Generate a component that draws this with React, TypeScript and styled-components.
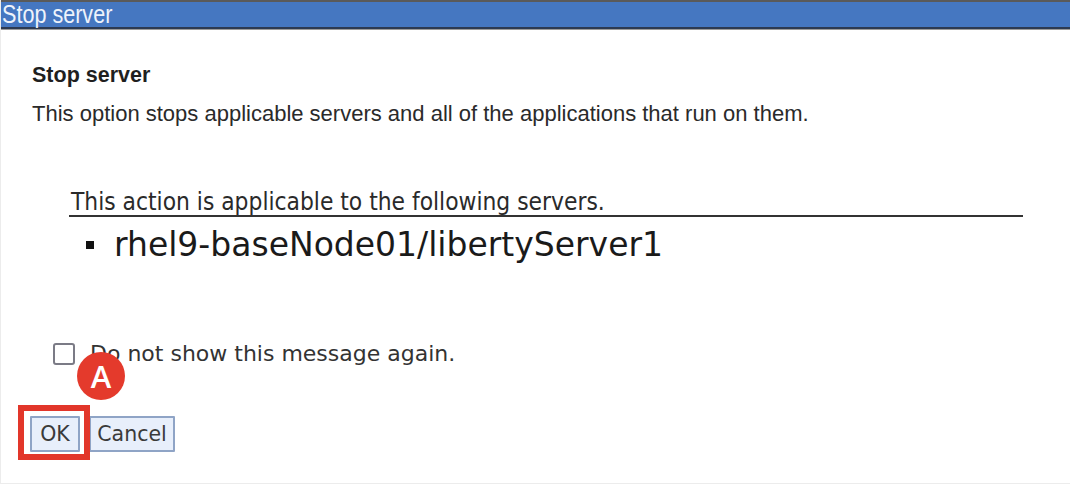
import React from "react";
import styled, { createGlobalStyle } from "styled-components";

const Global = createGlobalStyle`
  html, body { margin: 0; padding: 0; background: #ffffff; }
  body { font-family: "Liberation Sans", Arial, sans-serif; }
`;

const Page = styled.div`
  position: relative;
  width: 1070px;
  height: 484px;
  overflow: hidden;
  background: #ffffff;
  box-sizing: border-box;
  border-left: 1px solid #ececec;
  border-bottom: 1px solid #ececec;
`;

const TitleBar = styled.div`
  height: 25px;
  background: #4577c1;
  border-top: 2px solid #5a5a5a;
  border-bottom: 2px solid #2c3a52;
  box-shadow: 0 1px 0 #9a9a9a;
  padding-left: 1px;
  white-space: nowrap;
`;

const TitleText = styled.span`
  display: inline-block;
  color: #eef3fb;
  font-family: "Liberation Sans", Arial, sans-serif;
  font-size: 26px;
  line-height: 25px;
  transform: scaleX(0.83);
  transform-origin: left center;
`;

const Body = styled.div`
  padding: 34px 0 0 31px;
  color: #1f1f1f;
`;

const Heading = styled.div`
  font-family: "Liberation Sans", Arial, sans-serif;
  font-weight: bold;
  font-size: 21.5px;
  line-height: 24px;
`;

const Description = styled.div`
  font-family: "Liberation Sans", Arial, sans-serif;
  font-size: 22px;
  line-height: 24px;
  margin-top: 15px;
  color: #2a2a2a;
`;

const ServerSection = styled.div`
  margin: 64px 0 0 37px;
  width: 954px;
`;

const SectionTitle = styled.div`
  font-family: "DejaVu Sans Condensed", "DejaVu Sans", sans-serif;
  font-stretch: condensed;
  font-size: 24.3px;
  line-height: 24px;
  color: #2a2a2a;
  border-bottom: 2px solid #333333;
  padding-left: 2px;
  padding-bottom: 1px;
`;

const ServerList = styled.ul`
  list-style: none;
  margin: 8px 0 0;
  padding: 0 0 0 17px;
`;

const ServerItem = styled.li`
  display: flex;
  align-items: center;
  gap: 20px;
  font-family: "DejaVu Sans", sans-serif;
  font-size: 33px;
  line-height: 40px;
  color: #1a1a1a;
`;

const Bullet = styled.span`
  width: 8px;
  height: 8px;
  background: #111111;
  flex: none;
`;

const CheckRow = styled.label`
  display: flex;
  align-items: center;
  gap: 15px;
  margin: 76px 0 0 21px;
  font-family: "DejaVu Sans", sans-serif;
  font-size: 22px;
  color: #333333;
`;

const Box = styled.span`
  width: 18px;
  height: 18px;
  border: 2.5px solid #7b7b86;
  border-radius: 3px;
  background: #ffffff;
  flex: none;
`;

const ButtonRow = styled.div`
  display: flex;
  gap: 9px;
  margin: 50px 0 0 -2px;
`;

const Button = styled.button<{ $w: number }>`
  width: ${(p) => p.$w}px;
  height: 36px;
  padding: 0;
  background: #e8effb;
  border: 2px solid #8fa4c6;
  border-radius: 1px;
  font-family: "DejaVu Sans", sans-serif;
  font-size: 20.5px;
  color: #3a3a3a;
`;

const Highlight = styled.div`
  position: absolute;
  left: 17px;
  top: 405px;
  width: 60px;
  height: 43px;
  border: 6px solid #e2362a;
`;

const Badge = styled.div`
  position: absolute;
  left: 76px;
  top: 352px;
  width: 48px;
  height: 48px;
  border-radius: 50%;
  background: #e43a2c;
  color: #ffffff;
  display: flex;
  align-items: center;
  justify-content: center;
  font-family: "Open Sans", "Liberation Sans", sans-serif;
  font-size: 31px;
  font-weight: 600;
`;

export default function App() {
  return (
    <Page>
      <Global />
      <TitleBar>
        <TitleText>Stop server</TitleText>
      </TitleBar>
      <Body>
        <Heading>Stop server</Heading>
        <Description>
          This option stops applicable servers and all of the applications that run on them.
        </Description>
        <ServerSection>
          <SectionTitle>This action is applicable to the following servers.</SectionTitle>
          <ServerList>
            <ServerItem>
              <Bullet />
              rhel9-baseNode01/libertyServer1
            </ServerItem>
          </ServerList>
        </ServerSection>
        <CheckRow>
          <Box />
          Do not show this message again.
        </CheckRow>
        <ButtonRow>
          <Button $w={50}>OK</Button>
          <Button $w={86}>Cancel</Button>
        </ButtonRow>
      </Body>
      <Highlight />
      <Badge>A</Badge>
    </Page>
  );
}
